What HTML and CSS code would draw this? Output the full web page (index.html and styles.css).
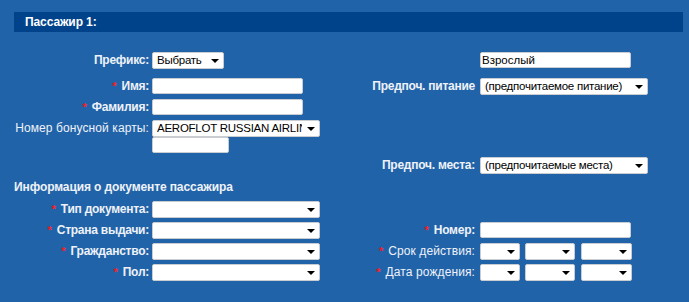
FILE: index.html
```html
<!DOCTYPE html>
<html lang="ru">
<head>
    <meta charset="UTF-8">
    <title>Пассажир 1</title>
    <link rel="stylesheet" href="styles.css">
</head>
<body>
    <div class="passenger">
        <div class="pax-header">Пассажир 1:</div>

        <div class="pax-form">
            <!-- row 1 -->
            <label class="lbl b r1 c1">Префикс:</label>
            <span class="sel w-prefix r1 c2"><select><option>Выбрать</option></select></span>
            <input class="txt w-151 r1 c4" type="text" value="Взрослый">

            <!-- row 2 -->
            <label class="lbl b r2 c1"><span class="req">*</span>Имя:</label>
            <input class="txt w-151 r2 c2" type="text">
            <label class="lbl b r2 c3">Предпоч. питание</label>
            <span class="sel w-wide r2 c4"><select><option>(предпочитаемое питание)</option></select></span>

            <!-- row 3 -->
            <label class="lbl b r3 c1"><span class="req">*</span>Фамилия:</label>
            <input class="txt w-151 r3 c2" type="text">

            <!-- row 4, 5 -->
            <label class="lbl r4 c1">Номер бонусной карты:</label>
            <span class="sel w-wide r4 c2"><select><option>AEROFLOT RUSSIAN AIRLINES</option></select></span>
            <input class="txt w-small r5 c2" type="text">

            <!-- row 6 -->
            <label class="lbl b r6 c3">Предпоч. места:</label>
            <span class="sel w-wide r6 c4"><select><option>(предпочитаемые места)</option></select></span>

            <!-- document -->
            <div class="doc-title r7">Информация о документе пассажира</div>

            <label class="lbl b r8 c1"><span class="req">*</span>Тип документа:</label>
            <span class="sel w-wide r8 c2"><select><option></option></select></span>

            <label class="lbl b r9 c1"><span class="req">*</span>Страна выдачи:</label>
            <span class="sel w-wide r9 c2"><select><option></option></select></span>
            <label class="lbl b r9 c3"><span class="req">*</span>Номер:</label>
            <input class="txt w-151 r9 c4" type="text">

            <label class="lbl b r10 c1"><span class="req">*</span>Гражданство:</label>
            <span class="sel w-wide r10 c2"><select><option></option></select></span>
            <label class="lbl r10 c3"><span class="req">*</span>Срок действия:</label>
            <div class="date r10 c4">
                <span class="sel w-day"><select><option></option></select></span>
                <span class="sel w-month"><select><option></option></select></span>
                <span class="sel w-year"><select><option></option></select></span>
            </div>

            <label class="lbl b r11 c1"><span class="req">*</span>Пол:</label>
            <span class="sel w-wide r11 c2"><select><option></option></select></span>
            <label class="lbl r11 c3"><span class="req">*</span>Дата рождения:</label>
            <div class="date r11 c4">
                <span class="sel w-day"><select><option></option></select></span>
                <span class="sel w-month"><select><option></option></select></span>
                <span class="sel w-year"><select><option></option></select></span>
            </div>
        </div>
    </div>
</body>
</html>
```

FILE: styles.css
```css
body {
    margin: 0;
    background: #2163a9;
    font-family: "Liberation Sans", Arial, sans-serif;
    font-size: 12px;
    color: #eef2f8;
}

.passenger {
    padding: 12px 6px 0 14px;
}

/* dark title bar */
.pax-header {
    background: #00438a;
    color: #fff;
    font-weight: bold;
    height: 20px;
    line-height: 20px;
    padding-left: 11px;
    letter-spacing: -0.1px;
}

.pax-form {
    display: grid;
    grid-template-columns: 138px 171px 157px 1fr;
    grid-template-rows: 26px 21px 21px 17px 20px 23px 21px 21px 21px 21px 21px;
    margin-top: 20px;
    align-items: start;
}

.lbl {
    text-align: right;
    line-height: 17px;
    height: 17px;
    white-space: nowrap;
    padding-right: 3px;
    letter-spacing: 0.1px;
}

.lbl.c3 {
    padding-right: 5px;
}

.b {
    font-weight: bold;
    letter-spacing: -0.25px;
}

.req {
    display: inline-block;
    margin-right: 5px;
    color: #ff1a1a;
    font-weight: bold;
    font-size: 11px;
    letter-spacing: 0;
}

.doc-title {
    grid-column: 1 / 5;
    font-weight: bold;
    line-height: 12px;
    padding-top: 1px;
    letter-spacing: -0.1px;
}

/* grid placement */
.c1 { grid-column: 1; }
.c2 { grid-column: 2; }
.c3 { grid-column: 3; }
.c4 { grid-column: 4; }
.r1 { grid-row: 1; }
.r2 { grid-row: 2; }
.r3 { grid-row: 3; }
.r4 { grid-row: 4; }
.r5 { grid-row: 5; }
.r6 { grid-row: 6; }
.r7 { grid-row: 7; }
.r8 { grid-row: 8; }
.r9 { grid-row: 9; }
.r10 { grid-row: 10; }
.r11 { grid-row: 11; }

/* text fields */
.txt {
    box-sizing: border-box;
    height: 16px;
    margin: 0;
    padding: 0 1px;
    border: 1px solid #c9ccd0;
    border-radius: 2px;
    background: #fff;
    font-family: inherit;
    font-size: 11.5px;
    color: #000;
}

.w-151 { width: 151px; }
.w-small { width: 77px; }

/* select boxes */
.sel {
    position: relative;
    display: block;
    height: 17px;
}

.sel select {
    appearance: none;
    -webkit-appearance: none;
    box-sizing: border-box;
    width: 100%;
    height: 17px;
    margin: 0;
    padding: 0 17px 0 4px;
    border: 1px solid #c9ccd0;
    border-radius: 2px;
    background: #fff;
    font-family: inherit;
    font-size: 11.5px;
    letter-spacing: -0.25px;
    line-height: 15px;
    color: #000;
}

.sel::after {
    content: "";
    position: absolute;
    right: 5px;
    top: 7px;
    border-left: 4px solid transparent;
    border-right: 4px solid transparent;
    border-top: 4px solid #000;
    pointer-events: none;
}

.w-prefix { width: 72px; }
.w-wide { width: 168px; }
.w-day { width: 40px; }
.w-month { width: 50px; }
.w-year { width: 51px; }

.date {
    display: flex;
    gap: 5px;
}

.date .w-year {
    margin-left: 1px;
}
```
